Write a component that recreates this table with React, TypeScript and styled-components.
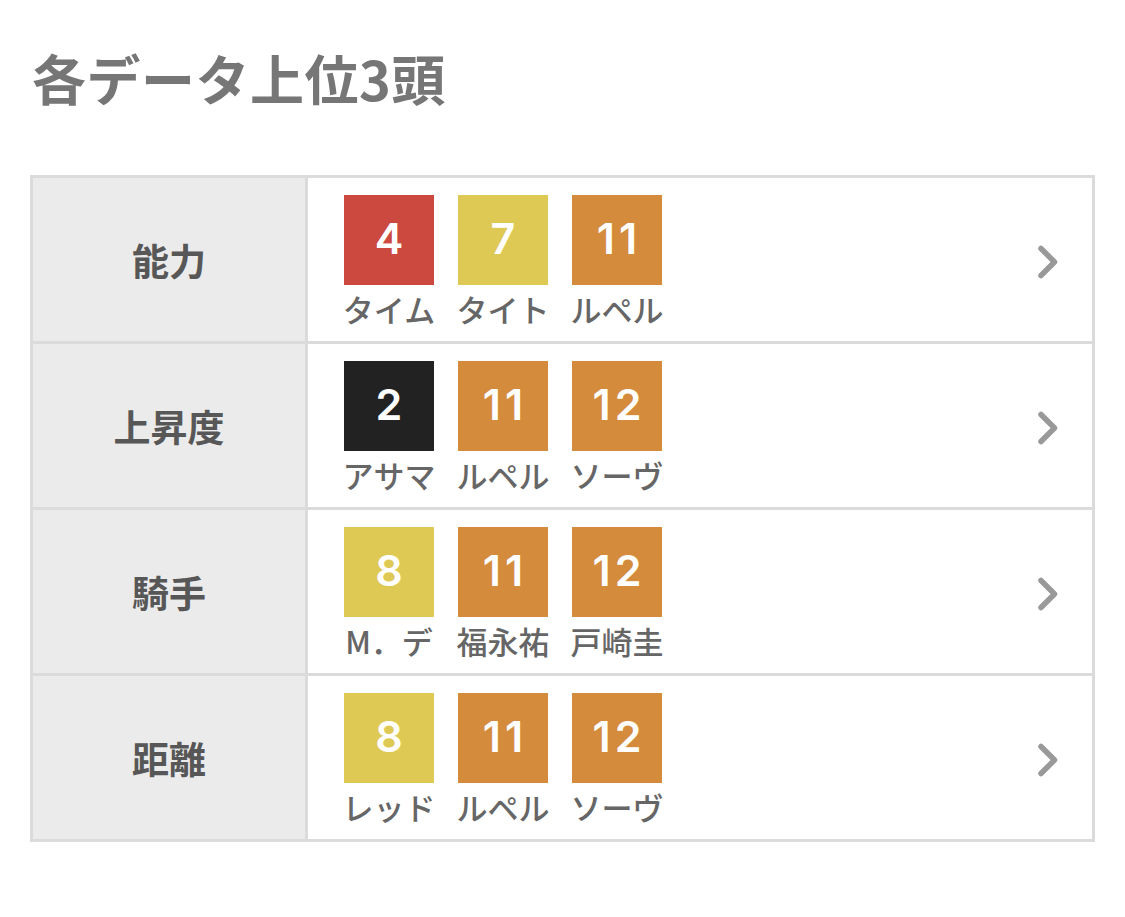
import styled, { createGlobalStyle } from "styled-components";

const GlobalStyle = createGlobalStyle`
  body {
    margin: 0;
    background: #fff;
    font-family: "Noto Sans CJK JP", "Noto Sans", sans-serif;
  }
`;

type Horse = { num: number; name: string; color: string };
type Row = { label: string; horses: Horse[] };

// 枠色
const RED = "#cc4940";
const YELLOW = "#dfc955";
const ORANGE = "#d48b3c";
const BLACK = "#222222";

const rows: Row[] = [
  {
    label: "能力",
    horses: [
      { num: 4, name: "タイム", color: RED },
      { num: 7, name: "タイト", color: YELLOW },
      { num: 11, name: "ルペル", color: ORANGE },
    ],
  },
  {
    label: "上昇度",
    horses: [
      { num: 2, name: "アサマ", color: BLACK },
      { num: 11, name: "ルペル", color: ORANGE },
      { num: 12, name: "ソーヴ", color: ORANGE },
    ],
  },
  {
    label: "騎手",
    horses: [
      { num: 8, name: "M．デ", color: YELLOW },
      { num: 11, name: "福永祐", color: ORANGE },
      { num: 12, name: "戸崎圭", color: ORANGE },
    ],
  },
  {
    label: "距離",
    horses: [
      { num: 8, name: "レッド", color: YELLOW },
      { num: 11, name: "ルペル", color: ORANGE },
      { num: 12, name: "ソーヴ", color: ORANGE },
    ],
  },
];

const Page = styled.div`
  padding: 45px 30px 60px;
`;

const Title = styled.h2`
  margin: 0 0 65px 2px;
  font-size: 54px;
  line-height: 65px;
  font-weight: 700;
  color: #767676;
  letter-spacing: 0.5px;
`;

const Table = styled.div`
  width: 1065px;
  box-sizing: border-box;
  border: 3px solid #dbdbdb;
`;

const TableRow = styled.div`
  display: grid;
  grid-template-columns: 275px 1fr;
  height: 163px;
  & + & {
    border-top: 3px solid #dbdbdb;
  }
`;

const Label = styled.div`
  display: flex;
  align-items: center;
  justify-content: center;
  background: #ebebeb;
  border-right: 3px solid #dbdbdb;
  font-size: 37px;
  font-weight: 700;
  color: #575757;
`;

const Cell = styled.div`
  display: flex;
  align-items: center;
  padding: 17px 31px 0 36px;
  align-self: start;
`;

const Horses = styled.div`
  display: flex;
  gap: 24px;
  flex: 1;
`;

const Item = styled.div`
  display: flex;
  flex-direction: column;
  align-items: center;
  width: 90px;
`;

const Box = styled.div<{ $bg: string }>`
  width: 90px;
  height: 90px;
  display: flex;
  align-items: center;
  justify-content: center;
  background: ${(p) => p.$bg};
  color: #fff;
  font-family: Inter, "Noto Sans", sans-serif;
  font-size: 43px;
  font-weight: 600;
  letter-spacing: 4px;
  padding: 0 0 5px 4px;
  box-sizing: border-box;
`;

const Name = styled.div`
  margin-top: 5px;
  font-size: 31px;
  line-height: 38px;
  font-weight: 500;
  color: #666;
  white-space: nowrap;
  width: 100px;
  text-align: center;
`;

const Chevron = () => (
  <svg width="26" height="34" viewBox="0 0 26 34">
    <path
      d="M6 3.5 L19.5 17 L6 30.5"
      fill="none"
      stroke="#999"
      strokeWidth="5.5"
      strokeLinecap="round"
      strokeLinejoin="round"
    />
  </svg>
);

export default function App() {
  return (
    <Page>
      <GlobalStyle />
      <Title>各データ上位3頭</Title>
      <Table>
        {rows.map((r) => (
          <TableRow key={r.label}>
            <Label>{r.label}</Label>
            <Cell>
              <Horses>
                {r.horses.map((h, i) => (
                  <Item key={i}>
                    <Box $bg={h.color}>{h.num}</Box>
                    <Name>{h.name}</Name>
                  </Item>
                ))}
              </Horses>
              <Chevron />
            </Cell>
          </TableRow>
        ))}
      </Table>
    </Page>
  );
}
